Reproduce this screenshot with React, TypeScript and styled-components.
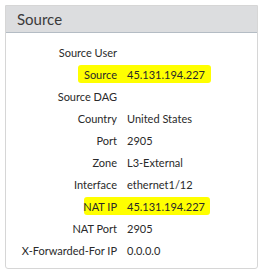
import styled, { createGlobalStyle } from "styled-components"

const GlobalStyle = createGlobalStyle`
  body {
    margin: 0;
    background: #fff;
    font-family: Lato, "Open Sans", sans-serif;
  }
`

const Panel = styled.div`
  margin: 5px;
  width: 253px;
  height: 264px;
  box-sizing: border-box;
  border: 1px solid #d6d6d6;
  border-radius: 0 0 3px 3px;
  display: flex;
  flex-direction: column;
`

const Header = styled.div`
  height: 26px;
  background: #dcdddf;
  border-bottom: 1px solid #b4bcc4;
  display: flex;
  align-items: center;
  padding-left: 11px;
  font-size: 15px;
  color: #3a3a3a;
`

const Body = styled.div`
  padding: 8px 0 7px;
  display: flex;
  flex-direction: column;
`

const Row = styled.div<{ $mark?: [number, number] }>`
  position: relative;
  height: 22px;
  display: grid;
  grid-template-columns: 111px 1fr;
  column-gap: 10px;
  align-items: center;
  font-size: 11px;
  color: #2a2a2a;

  &::before {
    content: "";
    display: ${(p) => (p.$mark ? "block" : "none")};
    position: absolute;
    left: ${(p) => (p.$mark ? p.$mark[0] : 0)}px;
    width: ${(p) => (p.$mark ? p.$mark[1] : 0)}px;
    top: 2px;
    bottom: 2px;
    background: #ffff00;
    border-radius: 3px;
  }
`

const Label = styled.span`
  position: relative;
  text-align: right;
`

const Value = styled.span`
  position: relative;
`

type Field = { label: string; value?: string; mark?: [number, number] }

const fields: Field[] = [
  { label: "Source User" },
  { label: "Source", value: "45.131.194.227", mark: [72, 133] },
  { label: "Source DAG" },
  { label: "Country", value: "United States" },
  { label: "Port", value: "2905" },
  { label: "Zone", value: "L3-External" },
  { label: "Interface", value: "ethernet1/12" },
  { label: "NAT IP", value: "45.131.194.227", mark: [78, 126] },
  { label: "NAT Port", value: "2905" },
  { label: "X-Forwarded-For IP", value: "0.0.0.0" },
]

export default function App() {
  return (
    <>
      <GlobalStyle />
      <Panel>
        <Header>Source</Header>
        <Body>
          {fields.map((f) => (
            <Row key={f.label} $mark={f.mark}>
              <Label>{f.label}</Label>
              <Value>{f.value ?? ""}</Value>
            </Row>
          ))}
        </Body>
      </Panel>
    </>
  )
}
